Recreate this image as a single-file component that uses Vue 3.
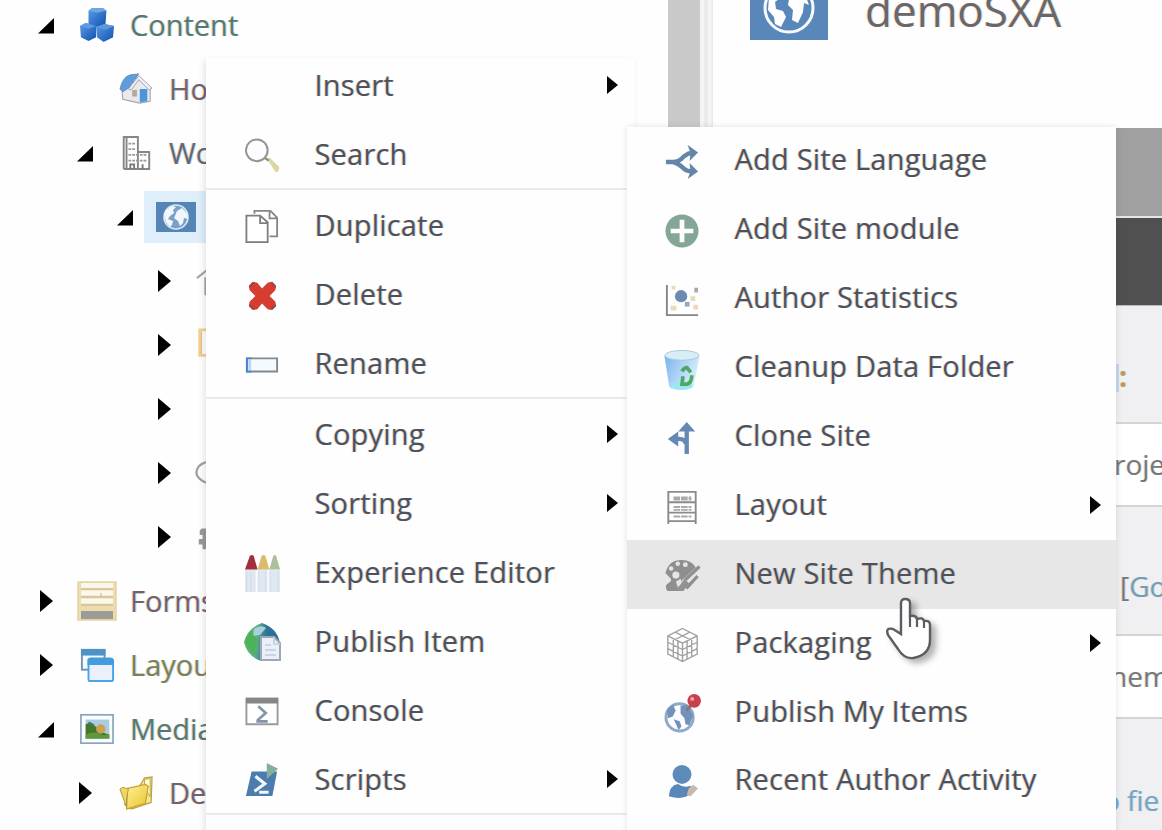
<script setup>
const tree = [
  { level: 0, state: 'open', icon: 'cubes', label: 'Content', tone: 'green' },
  { level: 1, state: '', icon: 'house', label: 'Home', tone: 'mauve' },
  { level: 1, state: 'open', icon: 'building', label: 'Wo', tone: 'slate' },
  { level: 2, state: 'open', icon: 'site', label: '', selected: true },
  { level: 3, state: 'closed', icon: 'homeline', label: '' },
  { level: 3, state: 'closed', icon: 'note', label: '' },
  { level: 3, state: 'closed', icon: '', label: '' },
  { level: 3, state: 'closed', icon: 'ring', label: '' },
  { level: 3, state: 'closed', icon: 'gear', label: '' },
  { level: 0, state: 'closed', icon: 'form', label: 'Forms', tone: 'mauve' },
  { level: 0, state: 'closed', icon: 'windows', label: 'Layout', tone: 'olive' },
  { level: 0, state: 'open', icon: 'picture', label: 'Media', tone: 'green' },
  { level: 1, state: 'closed', icon: 'folder', label: 'De', tone: 'mauve' },
]

const menuGroups = [
  [
    { label: 'Insert', more: true },
    { label: 'Search', icon: 'search' },
  ],
  [
    { label: 'Duplicate', icon: 'duplicate' },
    { label: 'Delete', icon: 'delete' },
    { label: 'Rename', icon: 'rename' },
  ],
  [
    { label: 'Copying', more: true },
    { label: 'Sorting', more: true },
    { label: 'Experience Editor', icon: 'crayons' },
    { label: 'Publish Item', icon: 'publish' },
    { label: 'Console', icon: 'console' },
    { label: 'Scripts', icon: 'scripts', more: true },
  ],
]

const submenu = [
  { label: 'Add Site Language', icon: 'split' },
  { label: 'Add Site module', icon: 'plus' },
  { label: 'Author Statistics', icon: 'scatter' },
  { label: 'Cleanup Data Folder', icon: 'bin' },
  { label: 'Clone Site', icon: 'clone' },
  { label: 'Layout', icon: 'rack', more: true },
  { label: 'New Site Theme', icon: 'palette', active: true },
  { label: 'Packaging', icon: 'package', more: true },
  { label: 'Publish My Items', icon: 'globepin' },
  { label: 'Recent Author Activity', icon: 'user' },
]
</script>

<template>
  <div class="app">
    <svg class="defs" width="0" height="0" aria-hidden="true">
      <defs>
        <linearGradient id="gBlue" x1="0" y1="0" x2="1" y2="1"><stop offset="0" stop-color="#5c9ee6" /><stop offset="1" stop-color="#0f4fae" /></linearGradient>
        <linearGradient id="gBin" x1="0" x2="1" y2=".5"><stop offset="0" stop-color="#74aeee" /><stop offset=".5" stop-color="#a9d0f5" /><stop offset="1" stop-color="#d9effb" /></linearGradient>
        <linearGradient id="gGlobe" x1="0" y1=".4" x2="1" y2=".5"><stop offset="0" stop-color="#4cb955" /><stop offset=".35" stop-color="#5fae83" /><stop offset=".6" stop-color="#2d7498" /><stop offset="1" stop-color="#2a6c98" /></linearGradient>
        <linearGradient id="gFolder" x1="0" y1="0" x2="1" y2="1"><stop offset="0" stop-color="#fff29a" /><stop offset="1" stop-color="#e9c22a" /></linearGradient>
      </defs>
      <symbol id="i-cubes" viewBox="0 0 36 36">
        <path d="M9 3l4-3h11l4 3-1 14-9 3-9-3z" fill="url(#gBlue)" /><path d="M9 3l4-3h11l4 3-10 2z" fill="#6ea6e4" />
        <path d="M0 19l6-3 11 3v12l-8 4-8-4z" fill="url(#gBlue)" /><path d="M0 19l6-3 11 3-8 3z" fill="#5d99de" />
        <path d="M17 20l9-3 10 2-1 12-10 5-7-5z" fill="url(#gBlue)" /><path d="M17 20l9-3 10 2-9 4z" fill="#5d99de" />
      </symbol>
      <symbol id="i-house" viewBox="0 0 36 36">
        <path d="M3 18l13-13 17 11v15l-11 2-18-4z" fill="#e9e9ec" stroke="#a5a5aa" stroke-width="1.2" />
        <path d="M1 18Q4 5 12 3l9-1-11 15-6 4z" fill="#5c9cdf" stroke="#688bb5" />
        <path d="M10 18L21 4l14 13-3 2-11-11-8 11z" fill="#f1f3f6" stroke="#9da2aa" />
        <path d="M22 18h8v13l-8 1z" fill="#4a95dc" /><path d="M14 19h5v7h-5z" fill="#b4a6a0" />
      </symbol>
      <symbol id="i-building" viewBox="0 0 36 36">
        <path d="M5 35V1h15v16h12v18H5M8 35V2M20 17v18" fill="none" stroke="#858585" stroke-width="2" />
        <path d="M10 8h8M10 14h8M10 20h19M10 26h19" fill="none" stroke="#999" stroke-width="1.800" stroke-dasharray="3 1" /><path d="M12 35v-5h4v5M25 35v-5" fill="none" stroke="#777" stroke-width="2" />
      </symbol>
      <symbol id="i-site" viewBox="0 0 40 30">
        <rect width="40" height="30" fill="#5585b7" />
        <circle cx="20" cy="15" r="12" fill="#7ba1c9" stroke="#dce9f4" stroke-width="1.6" />
        <path d="M10 8l6-4 4 1-3 3 1 3-4 3-2 3 5 2-1 4-2 2-4-5-2-7z" fill="#f1f7fc" />
        <path d="M21 9l5-3 5 5 1 6-4-1-1 5-3 3-2-5-4-3z" fill="#f1f7fc" />
      </symbol>
      <symbol id="i-homeline" viewBox="0 0 36 36"><path d="M2 15L12 7h5M11 14v19" fill="none" stroke="#a5a5a5" stroke-width="2.200" /></symbol>
      <symbol id="i-note" viewBox="0 0 36 36"><path d="M5 2h27v27H5z" fill="#fff" stroke="#f3cf90" stroke-width="3" /><path d="M7 4v24" stroke="#dcb67a" /></symbol>
      <symbol id="i-ring" viewBox="0 0 36 36"><path d="M18 6Q9 6 4 11-1 18 4 23q5 6 14 6" fill="none" stroke="#a0a0a0" stroke-width="2.400" /></symbol>
      <symbol id="i-gear" viewBox="0 0 36 36"><path d="M7 9h8v22H8v-5H4v-6h4v-4H5v-5z" fill="#999" /></symbol>
      <symbol id="i-form" viewBox="0 0 40 40">
        <rect x="1" y="1" width="38" height="38" fill="#ecdcae" stroke="#e3d2a2" stroke-width="1.5" />
        <path d="M4 4.500h32M4 12h32M4 20h32" stroke="#fbf7ed" stroke-width="5" />
        <path d="M4 8h32M4 16h32M4 24h32M24 12v4" stroke="#cfc09b" stroke-width="1.3" />
        <rect x="4" y="30" width="32" height="8" fill="#9d9b96" />
      </symbol>
      <symbol id="i-windows" viewBox="0 0 36 36">
        <rect x="2" y="2" width="24" height="21" fill="#f5f8fc" stroke="#7393ad" stroke-width="2" /><path d="M1 1h26v7H1z" fill="#4c94c8" />
        <rect x="9" y="12" width="26" height="23" rx="2" fill="#eceffc" stroke="#45a5ed" stroke-width="2" /><path d="M8 12q1-2 3-2h21q3 0 4 3v5H8z" fill="#459cdd" />
      </symbol>
      <symbol id="i-picture" viewBox="0 0 36 36">
        <rect x="1" y="3" width="34" height="30" fill="#fafcff" stroke="#8ba5b8" stroke-width="1.800" />
        <path d="M6 8h25v20H6z" fill="#a9cce1" /><path d="M6 13l5-2 14 11 6 2v4H6z" fill="#47762a" /><path d="M6 24q9-4 14-1t11 0v5H6z" fill="#5e993c" />
        <circle cx="22" cy="18" r="5" fill="#c9a150" /><path d="M9 11l6 3" stroke="#4c7178" stroke-width="2" />
      </symbol>
      <symbol id="i-folder" viewBox="0 0 36 36">
        <path d="M23 9l4-7 8-1-1 27-21 7-7-5z" fill="#f6e791" stroke="#bda43c" stroke-width="1.300" />
        <path d="M27 12V4l6-2v20z" fill="#fffbe0" stroke="#bda43c" /><path d="M9 13l19-4 3 2-3 18-20 6z" fill="url(#gFolder)" stroke="#c5a334" stroke-width="1.300" />
        <path d="M8 33L1 14l3-2 6 2-2 9z" fill="#f0d860" stroke="#a99543" />
      </symbol>
      <symbol id="i-search" viewBox="0 0 36 36">
        <path d="M23 22l3-1 12 11-5 5z" fill="#ddd5a4" /><path d="M21 21l4 3" stroke="#8d8b7b" stroke-width="2.500" />
        <circle cx="12.500" cy="13" r="11.500" fill="#fdfdff" stroke="#959394" stroke-width="2.100" />
      </symbol>
      <symbol id="i-duplicate" viewBox="0 0 36 36">
        <path d="M10 5V2h17l7 7v20h-8M26 2v8h8" fill="#fff" stroke="#858585" stroke-width="1.900" />
        <path d="M1.500 7H16l8 7v21H1.500zM16 7v8h8" fill="#fff" stroke="#7d7d7d" stroke-width="1.900" />
      </symbol>
      <symbol id="i-delete" viewBox="0 0 36 36">
        <path d="M4 9l5-5 4 1 5 6 6-6 4-1 5 5-1 4-6 6 6 6 1 4-5 5-4-1-6-6-5 6-4 1-5-5 1-4 6-6-6-6z" fill="#d63c30" />
        <path d="M5 9l4-4M28 5l4 4M5 29l4 4M28 33l4-4" stroke="#8f4c4c" stroke-width="2.600" />
      </symbol>
      <symbol id="i-rename" viewBox="0 0 36 36"><path d="M2 12h32v14H2z" fill="#f4faff" stroke="#808890" stroke-width="2" /><path d="M2 11v16M1 12h6M1 26h6" stroke="#4386cd" stroke-width="2" /><path d="M5 13v12" stroke="#bcd6ee" stroke-width="3" /></symbol>
      <symbol id="i-crayons" viewBox="0 0 36 40">
        <path d="M0 16h36v23H0z" fill="#dfe7f0" /><path d="M12 16v23M24 16v23" stroke="#f9fafc" stroke-width="2" /><path d="M2 18v21M6 18v21M14 18v21M21 18v21M26 18v21M34 18v21" stroke="#d4dde8" />
        <path d="M0 16L5 2q2-2 4 0l4 14z" fill="#a32f3e" /><path d="M13 16l4-14q2-2 4 0l4 14z" fill="#ddba6b" /><path d="M25 16l4-14q2-2 3 0l4 14z" fill="#adbf9c" />
      </symbol>
      <symbol id="i-publish" viewBox="0 0 38 40">
        <path d="M1 20Q5 6 19 1q15 5 18 20-5 13-19 18Q4 34 1 20z" fill="url(#gGlobe)" /><path d="M11 7q7-5 12-1l-6 7-7 1z" fill="#a9cfe0" /><path d="M3 17l5-7 4 5 3 4-3 7 1 7q-8-6-10-16z" fill="#4bb35a" />
        <path d="M18 15h13l6 6v17H18z" fill="#eaf0fa" stroke="#a0a7b4" stroke-width="2" /><path d="M31 15v7h6M22 23h6M22 28h11M22 33h11" fill="none" stroke="#c0cddd" stroke-width="1.700" />
      </symbol>
      <symbol id="i-console" viewBox="0 0 36 36"><path d="M1.500 5h33v27h-33z" fill="#fff" stroke="#9a9a9a" stroke-width="2" /><path d="M1 4h34v6H1z" fill="#868686" /><path d="M14 13l8 7-9 8M12 29h12" fill="none" stroke="#8293aa" stroke-width="2.800" /></symbol>
      <symbol id="i-scripts" viewBox="0 0 36 36"><path d="M7 9h27l-5 26H1z" fill="#4c7cae" /><path d="M11 14l10 8-11 8M15 31h10" fill="none" stroke="#f2f6fb" stroke-width="3.300" /><path d="M23 0l12 6-12 11z" fill="#86ae9d" /></symbol>
      <symbol id="i-split" viewBox="0 0 36 36"><path d="M1 18h7q7 0 12-6l5-3h5M8 18q6 1 12 7 3 3 10 3" fill="none" stroke="#6585a8" stroke-width="4.600" /><path d="M24 0l11 8-9 9 1-8zM26 19l9 9-11 8 3-8z" fill="#6585a8" /></symbol>
      <symbol id="i-plus" viewBox="0 0 36 36"><circle cx="18" cy="18" r="17.500" fill="#84a697" /><path d="M18 6v24M6 18h24" stroke="#fff" stroke-width="5" /></symbol>
      <symbol id="i-scatter" viewBox="0 0 36 36"><path d="M2 2v32h33" fill="none" stroke="#858585" stroke-width="2" /><circle cx="17" cy="14" r="6.500" fill="#6c8bb0" /><path d="M21 20h5v5h-5z" fill="#93a9be" /><path d="M7 3h4v4H7zM6 24h6v5H6zM27 14h5v5h-5zM30 23h5v5h-5z" fill="#ecd9b8" /><path d="M31 5h4v5h-4z" fill="#aaa" /></symbol>
      <symbol id="i-bin" viewBox="0 0 38 42"><path d="M1 7q17-10 36 0l-6 32q-12 5-25 0z" fill="url(#gBin)" /><ellipse cx="19" cy="6.500" rx="17.500" ry="5" fill="#d7edf8" stroke="#a9c9da" /><path d="M7 34l23 1-1 5q-11 4-22 0z" fill="#9de4f4" /><path d="M19 23q2-4 5-4l4 5M29 27q0 8-5 9M25 36h-6l1-8" fill="none" stroke="#4aaa66" stroke-width="3.800" /></symbol>
      <symbol id="i-clone" viewBox="0 0 36 36"><path d="M23 35V6M22 24q-1-5-7-5H8" fill="none" stroke="#6588b5" stroke-width="4.600" /><path d="M23 1l9 10H14zM14 11v16L3 19z" fill="#6588b5" /></symbol>
      <symbol id="i-rack" viewBox="0 0 36 36"><path d="M3.500 36V2h29v34M3 2h30M4 13h28M4 24h28M4 33h28" fill="none" stroke="#8a8a8a" stroke-width="2" /><path d="M9 8h19M9 10h19M9 18h19M9 21h19M9 28h19" stroke="#aaa" stroke-width="2" stroke-dasharray="7 1" /></symbol>
      <symbol id="i-palette" viewBox="0 0 38 36"><path d="M1 15Q4 1 18 1q11 0 15 8L18 23l-5 11H3q-4-6 2-9 4-3 0-6z" fill="#8f8f8f" /><g fill="#e5e5e5"><circle cx="7" cy="10" r="2.400" /><circle cx="14" cy="5" r="2.400" /><circle cx="22" cy="6" r="2.600" /><circle cx="12" cy="17" r="3.800" /><path d="M12 24l5-3 1 5-4 4z" /></g><path d="M37 8L22 22M35 18L23 31" stroke="#8f8f8f" stroke-width="3.500" /><path d="M21 21l5 5-6 8h-8z" fill="#929292" /></symbol>
      <symbol id="i-package" viewBox="0 0 36 38"><path d="M18 1l16 8v20l-16 8L2 29V9zM2 9l16 8 16-8M18 17v20M8 12v20M13 15v20M23 15v20M28 12v20M10 5l16 8M26 5l-16 8M2 16l16 8 16-8M2 23l16 8 16-8" fill="none" stroke="#a0a0a0" stroke-width="1.500" /></symbol>
      <symbol id="i-globepin" viewBox="0 0 38 40"><circle cx="16" cy="24" r="14" fill="#fdfdff" stroke="#8eaaca" stroke-width="3" /><path d="M3 16l6-5 3 6-3 6-5 2zM10 26l6 2 2 5-3 4zM17 12l7-1 6 11-4 10-4-1-1-6-4-5z" fill="#7092bb" /><path d="M31 8l-8 9" stroke="#8b7280" stroke-width="3" /><circle cx="31" cy="7" r="7" fill="#c9404a" /><circle cx="29" cy="5" r="2" fill="#f3a5a7" /></symbol>
      <symbol id="i-user" viewBox="0 0 36 36"><circle cx="18" cy="10" r="10" fill="#5e8cba" /><path d="M4 33q1-12 10-13 6 5 13 2 2 3 1 8-9 8-24 3z" fill="#5987b7" /><path d="M25 25l5-4 5 4-8 8-4-1z" fill="#c9b8ac" /></symbol>
    </svg>

    <aside class="tree">
      <div v-for="(n, i) in tree" :key="i" class="node" :class="'level-' + n.level">
        <span class="toggle"><svg v-if="n.state" viewBox="0 0 18 24" :class="n.state">
          <path v-if="n.state === 'open'" d="M0 20.500L16 5v15.500z" /><path v-else d="M2 1l13 11L2 23z" />
        </svg></span>
        <span class="node-body" :class="{ selected: n.selected }">
          <svg v-if="n.icon" class="node-icon" :class="n.icon"><use :href="'#i-' + n.icon" /></svg>
          <span class="node-label" :class="n.tone">{{ n.label }}</span>
        </span>
      </div>
    </aside>
    <div class="scrollbar"></div>
    <div class="gutter"></div>
    <main class="editor">
      <header class="title">
        <svg class="title-icon" viewBox="0 0 78 80">
          <rect width="78" height="80" fill="#5a87ba" />
          <circle cx="39" cy="48" r="24" fill="#5a87ba" stroke="#f6fafd" stroke-width="3" />
          <path d="M19 37l10-9 7 1-3 7-8 6 1 7 7 2 3 6-5 10-6-3-1-7-6-7z" fill="#fff" />
          <path d="M39 39l8-10 8 5 4 11-5-2-1 9-5 11-6-3 1-10-5-5z" fill="#fff" />
        </svg>
        <h1>demoSXA</h1>
      </header>
      <div class="band ribbon"></div>
      <div class="band section"></div>
      <div class="field label first"><i class="edge"></i><span class="gold">:</span></div>
      <div class="field input proj">roje</div>
      <div class="field label go">[<span>Go</span></div>
      <div class="field input theme">hem</div>
      <div class="field label last">o fie</div>
    </main>

    <nav class="menu context">
      <ul v-for="(group, g) in menuGroups" :key="g">
        <li v-for="item in group" :key="item.label">
          <span class="slot"><svg v-if="item.icon" :class="item.icon"><use :href="'#i-' + item.icon" /></svg></span>
          <span class="text">{{ item.label }}</span>
          <svg v-if="item.more" class="more" viewBox="0 0 11 18"><path d="M0 0l11 9L0 18z" /></svg>
        </li>
      </ul>
      <ul class="tail"></ul>
    </nav>
    <nav class="menu sub">
      <ul>
        <li v-for="item in submenu" :key="item.label" :class="{ active: item.active }">
          <span class="slot"><svg :class="item.icon"><use :href="'#i-' + item.icon" /></svg></span>
          <span class="text">{{ item.label }}</span>
          <svg v-if="item.more" class="more" viewBox="0 0 11 18"><path d="M0 0l11 9L0 18z" /></svg>
        </li>
      </ul>
    </nav>
    <svg class="cursor" viewBox="0 0 46 62">
      <path d="M15 36V5q0-4 4-4 5 0 5 4v13q6-1 7 3 6-2 7 2 6-1 6 4v15q0 15-17 18-9 1-15-9L2 37q-3-8 5-6z" fill="#fff" stroke="#5c5c62" stroke-width="2.400" />
      <path d="M24 17v12M31 20v9M38 22v8" stroke="#5c5c62" stroke-width="2.200" />
    </svg>
  </div>
</template>

<style>
body { margin: 0; overflow: hidden; }
</style>
<style scoped>
.app { position: relative; display: flex; width: 1162px; height: 830px; overflow: hidden; background: #fefefe; font-family: "Open Sans", "Noto Sans", sans-serif; font-size: 29px; color: #50505a; }
.defs { position: absolute; }
svg { display: block; flex: none; overflow: visible; }
.tree { width: 668px; flex: none; margin-top: -7px; }
.node { display: flex; align-items: center; height: 64px; padding-left: 38px; }
.level-1 { padding-left: 77px; }
.level-2 { padding-left: 117px; }
.level-3 { padding-left: 156px; }
.toggle { width: 42px; flex: none; }
.toggle svg { width: 18px; height: 24px; fill: #000; }
.level-2 .toggle { width: 27px; }
.level-3 .toggle { width: 39px; }
.node-body { display: flex; align-items: center; gap: 16px; }
.node-label { padding-bottom: 2px; }
.selected { height: 52px; width: 80px; padding-left: 12px; background: #deeefa; }
.node-icon { width: 34px; height: 34px; }
.node-icon.site { width: 40px; height: 30px; }
.node-icon.form { width: 40px; height: 40px; margin: 0 -3px; }
.node-label, .text { text-shadow: -1px 0 rgba(235, 155, 60, .36), 1px 0 rgba(70, 165, 225, .36); white-space: nowrap; }
.green { color: #56796f; }
.mauve { color: #74616b; }
.slate { color: #626675; }
.olive { color: #7b8056; }
.scrollbar { width: 32px; flex: none; background: #c9c9c9; }
.gutter { width: 13px; flex: none; background: linear-gradient(90deg, #f4f4f4 0 4px, #e8e8e8 5px 7px, #f4f4f4 8px 11px, #e9e9e9 12px); }
.editor { flex: 1; min-width: 0; }
.title { display: flex; height: 128px; align-items: flex-start; padding-left: 37px; gap: 38px; }
.title-icon { width: 78px; height: 80px; margin-top: -40px; }
.title h1 { margin: -20px 0 0 -1px; font-size: 44px; line-height: 60px; font-weight: 400; color: #6b6668; text-shadow: -1px 0 rgba(235, 165, 70, .3), 1px 0 rgba(80, 165, 225, .3); }
.ribbon { height: 88px; background: #a0a0a0; border-bottom: 2px solid #e5e5e5; }
.section { height: 87px; background: #505050; border-bottom: 1px solid #bbb; }
.field { box-sizing: border-box; border-bottom: 2px solid #d5d5d6; padding-left: 402px; white-space: pre; color: #777; font-size: 28px; line-height: 80px; text-shadow: -1px 0 rgba(235, 165, 70, .25), 1px 0 rgba(80, 165, 225, .25); }
.label { background: #f0f0f2; }
.input { background: #fff; height: 83px; }
.first { height: 118px; line-height: 140px; display: flex; }
.edge { width: 4px; height: 28px; margin-top: 58px; background: #c5d8ea; }
.gold { color: #b89b51; font-weight: 700; }
.go { height: 129px; line-height: 158px; padding-left: 407px; }
.go span { color: #6f9eb4; }
.proj { line-height: 80px; padding-left: 401px; }
.theme { padding-left: 397px; line-height: 80px; }
.last { height: 120px; border: 0; line-height: 162px; padding-left: 390px; color: #6fa6c9; }
.menu { position: absolute; background: #fefefe; }
.context { left: 206px; top: 58px; width: 429px; height: 790px; box-shadow: -2px 3px 6px rgba(50, 40, 60, .12); }
.context ul:first-child { margin-top: -8px; }
.sub { left: 627px; top: 126.500px; width: 489px; height: 720px; box-shadow: 0 0 6px rgba(50, 40, 60, .13); }
ul { list-style: none; margin: 0; padding: 0; }
.context ul + ul { border-top: 2px solid #ebeaeb; }
.menu li { display: flex; align-items: center; height: 69px; letter-spacing: .2px; }
.sub li { height: 68.900px; }
.context li { padding-left: 38px; padding-right: 17px; }
.sub li { padding-left: 37px; padding-right: 15px; }
.slot { display: flex; justify-content: center; width: 36px; flex: none; margin-right: 34.500px; padding-top: 3px; }
.slot svg { width: 34px; height: 34px; }
.slot svg.crayons { width: 37px; height: 39px; }
.slot svg.publish { width: 38px; height: 40px; }
.slot svg.bin { width: 38px; height: 41px; }
.slot svg.globepin { width: 37px; height: 39px; }
.slot svg.palette { width: 37px; height: 34px; }
.slot svg.package { width: 33px; height: 36px; }
.text { flex: 1; line-height: 40px; }
.sub .text { padding-bottom: 3px; }
.more { width: 11px; height: 18px; fill: #050505; }
.active { background: #e7e7e7; }
.cursor { position: absolute; left: 886px; top: 598px; width: 46px; height: 62px; filter: drop-shadow(5px 4px 3px rgba(0, 0, 0, .3)); }
</style>
